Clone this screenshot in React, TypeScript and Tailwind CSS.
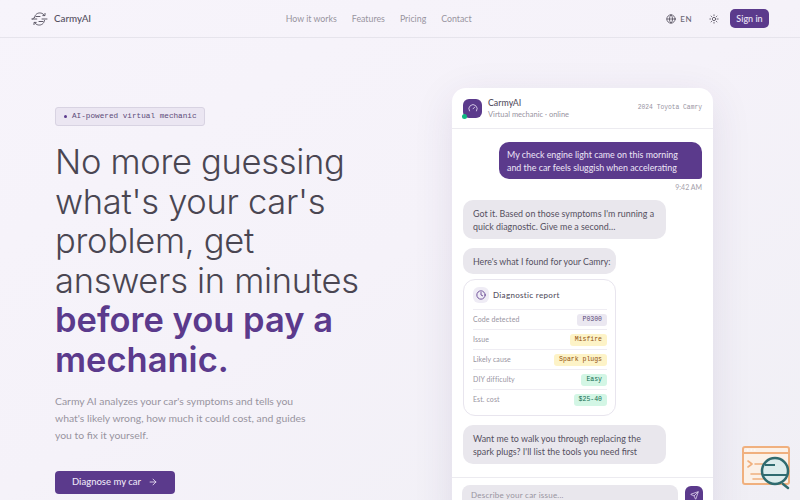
import React from 'react';
import { Globe, Sun, ArrowRight, Clock, Send, Gauge } from 'lucide-react';

const rows = [
  { label: 'Code detected', value: 'P0300', cls: 'bg-[#ebe8f1] text-[#5b4a78]' },
  { label: 'Issue', value: 'Misfire', cls: 'bg-[#fdf3c7] text-[#92500f]' },
  { label: 'Likely cause', value: 'Spark plugs', cls: 'bg-[#fdf3c7] text-[#92500f]' },
  { label: 'DIY difficulty', value: 'Easy', cls: 'bg-[#d3f6e5] text-[#126b50]' },
  { label: 'Est. cost', value: '$25-40', cls: 'bg-[#d3f6e5] text-[#126b50]' },
];

const Logo = () => (
  <svg width="17" height="16" viewBox="0 0 17 16" fill="none" stroke="#5e5a68" strokeWidth="1" strokeLinecap="round" strokeLinejoin="round">
    <path d="M3.500 6.500C4 3.500 6.500 1.600 9.500 2c1.800.2 3.200 1.200 4 2.600" />
    <path d="M13.500 9.500c-.5 3-3 4.900-6 4.500-1.800-.2-3.200-1.200-4-2.600" />
    <path d="M11.800 4.600h2.200V2.400M5.200 11.400H3v2.200" />
    <path d="M.8 8h5M1.500 8l2-1.500M11 8h5M5 5.500h4M8 10.500h4" />
  </svg>
);

const Report = () => (
  <div className="w-[153px] rounded-xl border border-[#e8e5ee] bg-white pl-[9px] pr-[8px] pt-[7px] pb-[6px]">
    <div className="flex items-center gap-[4px] pb-[6px]">
      <div className="flex h-[16px] w-[16px] items-center justify-center rounded-md bg-[#efecf5]">
        <Clock size={10} className="text-[#5b3a8c]" />
      </div>
      <span className="text-[8px] font-medium tracking-[0.04em] text-[#55505f]">Diagnostic report</span>
    </div>
    {rows.map((r) => (
      <div key={r.label} className="flex h-[20px] items-center justify-between border-t border-[#efedf3]">
        <span className="text-[7px] tracking-[0.1px] text-[#98949f]">{r.label}</span>
        <span className={`rounded-[3px] px-[5px] font-['Liberation_Mono',monospace] text-[6.500px] leading-[12px] ${r.cls}`}>{r.value}</span>
      </div>
    ))}
  </div>
);

const Chat = () => (
  <div className="h-[440px] w-[261px] shrink-0 overflow-hidden rounded-t-[14px] bg-white shadow-[0_10px_40px_rgba(60,40,100,0.10)]">
    <div className="flex h-[41px] items-center justify-between border-b border-[#ecebf0] px-[11px]">
      <div className="flex items-center gap-[6px]">
        <div className="relative flex h-[19px] w-[19px] items-center justify-center rounded-md bg-[#5b3a8c]">
          <Gauge size={10} className="text-[#e9e0f5]" />
          <span className="absolute bottom-[-1px] left-[-1px] h-[5px] w-[5px] rounded-full bg-[#10b981]" />
        </div>
        <div className="flex flex-col">
          <span className="text-[8.800px] font-medium leading-[13px] text-[#55505f]">CarmyAI</span>
          <span className="text-[7.500px] leading-[12px] text-[#98949f]">Virtual mechanic · online</span>
        </div>
      </div>
      <span className="font-['Liberation_Mono',monospace] text-[6.300px] text-[#98949f]">2024 Toyota Camry</span>
    </div>
    <div className="flex flex-col px-[11px] pt-[13px]">
      <div className="w-[203px] self-end rounded-[10px] rounded-br-[3px] bg-[#5b3a8c] px-[8px] py-[5.500px] text-[8.900px] leading-[13px] text-[#ede6f7]">
        My check engine light came on this morning<br />and the car feels sluggish when accelerating
      </div>
      <span className="mt-[3px] self-end text-[7px] leading-[10px] text-[#a3a0aa]">9:42 AM</span>
      <div className="mt-[8px] w-[203px] rounded-[10px] bg-[#e9e7ed] px-[10px] py-[6.500px] text-[8.900px] leading-[13px] text-[#55505f]">
        Got it. Based on those symptoms I'm running a<br />quick diagnostic. Give me a second…
      </div>
      <div className="mt-[9px] w-[153px] whitespace-nowrap rounded-[10px] bg-[#e9e7ed] px-[10px] py-[6.500px] text-[8.800px] leading-[13px] text-[#55505f]">
        Here's what I found for your Camry:
      </div>
      <div className="mt-[5px]"><Report /></div>
      <div className="mt-[9px] w-[203px] rounded-[10px] bg-[#e9e7ed] px-[10px] py-[6.500px] text-[8.900px] leading-[13px] text-[#55505f]">
        Want me to walk you through replacing the<br />spark plugs? I'll list the tools you need first
      </div>
    </div>
    <div className="mt-[13px] flex items-start gap-[7px] border-t border-[#ecebf0] pl-[10px] pt-[7px]">
      <div className="h-[24px] w-[216px] rounded-lg bg-[#e9e7ed] px-[9px] pt-[5px] text-[8px] leading-[10px] tracking-[0.03em] text-[#98949f]">Describe your car issue...</div>
      <div className="mt-[1px] flex h-[19px] w-[18px] items-center justify-center rounded-md bg-[#5b3a8c]">
        <Send size={9} className="text-[#e9e0f5]" />
      </div>
    </div>
  </div>
);

const Badge = () => (
  <svg width="48" height="44" viewBox="0 0 48 44" fill="none" className="absolute bottom-[10px] right-[10px]">
    <rect x="1" y="1" width="46" height="37" rx="2" fill="#fbf1e8" stroke="#f0b07e" strokeWidth="2" />
    <path d="M1 7h46" stroke="#f0b07e" strokeWidth="2" />
    <path d="M5 4h1.500M8.500 4h1.500M12 4h1.500" stroke="#fff" />
    <path d="M6 15l4 3-4 3M13 18h10M9 28h12M11 33h10" stroke="#f0b07e" strokeWidth="1.600" strokeLinecap="round" strokeLinejoin="round" />
    <path d="M41 38l5 4" stroke="#2f6b6f" strokeWidth="2.500" strokeLinecap="round" />
    <circle cx="33" cy="25" r="13" fill="#dcecec" stroke="#2f6b6f" strokeWidth="2.500" />
    <path d="M23 19h10M21 29h25" stroke="#2f6b6f" strokeWidth="2" />
  </svg>
);

export default function App() {
  return (
    <div className="relative h-[500px] w-[800px] overflow-hidden bg-gradient-to-br from-[#f7f4fb] via-[#f5f2f9] to-[#f0eff5] font-['Lato',sans-serif]">
      <header className="flex h-[38px] items-center justify-between border-b border-[#e6e4ec] px-[31px]">
        <div className="flex items-center gap-[6px]">
          <Logo />
          <span className="text-[9.800px] font-medium text-[#55505f]">CarmyAI</span>
        </div>
        <nav className="flex gap-[15px] text-[8.800px] text-[#98949f]">
          <span>How it works</span>
          <span>Features</span>
          <span>Pricing</span>
          <span>Contact</span>
        </nav>
        <div className="flex items-center">
          <Globe size={10} className="text-[#55505f]" />
          <span className="ml-[4px] text-[8px] font-medium tracking-[0.06em] text-[#6b6775]">EN</span>
          <Sun size={10} className="ml-[17px] text-[#55505f]" />
          <div className="ml-[11px] flex h-[19px] w-[39px] items-center justify-center rounded-[5px] bg-[#5b3a8c] text-[9px] font-medium text-[#ede6f7]">Sign in</div>
        </div>
      </header>
      <main className="flex justify-between pl-[55px] pr-[87px] pt-[50px]">
        <div className="w-[330px] pt-[19px]">
          <div className="flex h-[19px] w-[150px] items-center gap-[5px] rounded-[3px] border border-[#d8d3e2] bg-[#ebe6f2] pl-[8px] font-['Liberation_Mono',monospace] text-[7.700px] text-[#5b4a78]">
            <span className="h-[3px] w-[3px] rounded-full bg-[#5b3a8c]" />
            AI-powered virtual mechanic
          </div>
          <h1 className="mt-[16px] font-['Inter',sans-serif] text-[34.500px] font-light leading-[39.600px] tracking-[-0.3px] text-[#4a4652]">
            No more guessing<br />what's your car's<br />problem, get<br />answers in minutes<br />
            <span className="font-semibold tracking-normal text-[#5b3a8c]">before you pay a<br />mechanic.</span>
          </h1>
          <p className="mt-[13px] w-[270px] text-[10.400px] leading-[17px] text-[#98949f]">
            Carmy AI analyzes your car's symptoms and tells you<br />what's likely wrong, how much it could cost, and guides<br />you to fix it yourself.
          </p>
          <div className="mt-[27px] flex h-[23px] w-[120px] items-center justify-center gap-[7px] rounded-[4px] bg-[#5b3a8c] text-[9.500px] font-medium text-[#ede6f7]">
            Diagnose my car
            <ArrowRight size={10} />
          </div>
        </div>
        <Chat />
      </main>
      <Badge />
    </div>
  );
}
